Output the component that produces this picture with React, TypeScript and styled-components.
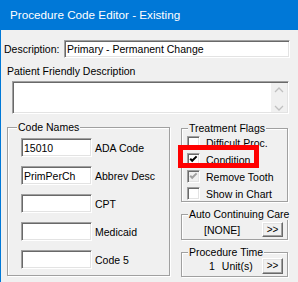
import React from 'react';
import styled, { createGlobalStyle, css } from 'styled-components';

const GlobalStyle = createGlobalStyle`
  body {
    margin: 0;
    background: #f0f0f0;
    font-family: 'Liberation Sans', Arial, sans-serif;
    font-size: 10.5px;
    color: #000;
  }
`;

const sunken = css`
  border: 1px solid;
  border-color: #a0a0a0 #ffffff #ffffff #a0a0a0;
  box-shadow: inset 1px 1px 0 #696969, inset -1px -1px 0 #e3e3e3;
`;

const Window = styled.div`
  width: 298px;
  height: 282px;
  box-sizing: border-box;
  border-left: 1px solid #0078d7;
  background: #f0f0f0;
  overflow: hidden;
`;

const TitleBar = styled.div`
  height: 30px;
  line-height: 30px;
  background: #0078d7;
  color: #fff;
  font-size: 11.7px;
  margin-left: -1px;
  padding-left: 10px;
`;

const Body = styled.div`
  padding-left: 3px;
`;

const DescRow = styled.div`
  display: flex;
  align-items: center;
  margin-top: 10px;
`;

const DescLabel = styled.label`
  width: 60px;
`;

const TextInput = styled.input<{ $width: number; $height: number }>`
  ${sunken};
  box-sizing: border-box;
  width: ${(p) => p.$width}px;
  height: ${(p) => p.$height}px;
  padding: 0 0 0 2px;
  margin: 0;
  background: #fff;
  font-family: inherit;
  font-size: 10.5px;
  outline: none;
`;

const PatientLabel = styled.div`
  margin: 7px 0 0 3px;
  line-height: 12px;
`;

const Memo = styled.div`
  ${sunken};
  box-sizing: border-box;
  display: flex;
  width: 277px;
  height: 33px;
  margin: 4px 0 0 8px;
  padding: 1px;
  background: #fff;
`;

const MemoText = styled.textarea`
  flex: 1;
  border: none;
  outline: none;
  resize: none;
  margin: 0;
  padding: 0;
  background: #fff;
  font-family: inherit;
  font-size: 10.5px;
`;

const ScrollCol = styled.div`
  width: 16px;
  display: flex;
  flex-direction: column;
  justify-content: space-between;
  align-items: center;
  padding: 4px 0 1px;
  background: #f0f0f0;
`;

const Bottom = styled.div`
  display: flex;
  margin-top: 7px;
`;

const Group = styled.fieldset<{ $width: number; $height: number }>`
  box-sizing: border-box;
  width: ${(p) => p.$width}px;
  height: ${(p) => p.$height}px;
  min-width: 0;
  margin: 0;
  padding: 0;
  border: 1px solid #a0a0a0;
  box-shadow: inset 1px 1px 0 #fff, 1px 1px 0 #fff;
`;

const Legend = styled.legend<{ $offset: number }>`
  margin-left: ${(p) => p.$offset}px;
  padding: 0 1px;
  line-height: 12px;
  background: #f0f0f0;
  white-space: nowrap;
`;

const CodesGroup = styled(Group)`
  margin-left: 3px;
`;

const CodeList = styled.div`
  display: flex;
  flex-direction: column;
  gap: 9px;
  padding: 5px 0 0 13px;
`;

const CodeRow = styled.div`
  display: flex;
  align-items: center;
  gap: 3px;
`;

const RightCol = styled.div`
  display: flex;
  flex-direction: column;
  gap: 6px;
  width: 107px;
  margin: 1px 0 0 11px;
`;

const FlagList = styled.div`
  padding-left: 5px;
`;

const FlagRow = styled.div`
  position: relative;
  display: flex;
  align-items: center;
  gap: 6px;
  height: 17px;
`;

const Box = styled.span<{ $disabled?: boolean }>`
  ${sunken};
  box-sizing: border-box;
  width: 13px;
  height: 13px;
  display: flex;
  align-items: center;
  justify-content: center;
  background: ${(p) => (p.$disabled ? '#f0f0f0' : '#fff')};
`;

const Highlight = styled.div`
  position: absolute;
  left: -9px;
  top: -6px;
  width: 81px;
  height: 23px;
  box-sizing: border-box;
  border: 5px solid #ff0000;
  z-index: 1;
  pointer-events: none;
`;

const ValueRow = styled.div<{ $indent: number; $top: number }>`
  display: flex;
  align-items: center;
  padding: ${(p) => p.$top}px 4px 0 ${(p) => p.$indent}px;
`;

const Units = styled.span`
  margin-left: 7px;
`;

const MoreButton = styled.button<{ $height: number }>`
  margin: 0 0 0 auto;
  padding: 0;
  width: 21px;
  height: ${(p) => p.$height}px;
  box-sizing: border-box;
  border: 1px solid;
  border-color: #fff #696969 #696969 #fff;
  box-shadow: inset -1px -1px 0 #a0a0a0, inset 1px 1px 0 #e3e3e3;
  background: #f0f0f0;
  font-family: inherit;
  font-size: 10px;
  line-height: 1;
  color: #000;
`;

const Chevron: React.FC<{ down?: boolean }> = ({ down }) => (
  <svg width="10" height="6" viewBox="0 0 10 6">
    <path
      d={down ? 'M1 1 L5 5 L9 1' : 'M1 5 L5 1 L9 5'}
      fill="none"
      stroke="#c0c0c0"
      strokeWidth="1.3"
    />
  </svg>
);

const CheckBox: React.FC<{ checked?: boolean; disabled?: boolean }> = ({
  checked,
  disabled,
}) => (
  <Box $disabled={disabled}>
    {checked && (
      <svg width="9" height="9" viewBox="0 0 9 9">
        <polyline
          points="1.2,3.8 3.2,5.8 7.6,1.4"
          fill="none"
          stroke={disabled ? '#a0a0a0' : '#000'}
          strokeWidth="2"
        />
      </svg>
    )}
  </Box>
);

const codes = [
  { value: '15010', label: 'ADA Code' },
  { value: 'PrimPerCh', label: 'Abbrev Desc' },
  { value: '', label: 'CPT' },
  { value: '', label: 'Medicaid' },
  { value: '', label: 'Code 5' },
];

const flags = [
  { label: 'Difficult Proc.', checked: false },
  { label: 'Condition', checked: true, marked: true },
  { label: 'Remove Tooth', checked: true, disabled: true },
  { label: 'Show in Chart', checked: false },
];

export default function App() {
  return (
    <Window>
      <GlobalStyle />
      <TitleBar>Procedure Code Editor - Existing</TitleBar>
      <Body>
        <DescRow>
          <DescLabel>Description:</DescLabel>
          <TextInput $width={226} $height={18} defaultValue="Primary - Permanent Change" />
        </DescRow>
        <PatientLabel>Patient Friendly Description</PatientLabel>
        <Memo>
          <MemoText />
          <ScrollCol>
            <Chevron />
            <Chevron down />
          </ScrollCol>
        </Memo>
        <Bottom>
          <CodesGroup $width={163} $height={155}>
            <Legend $offset={9}>Code Names</Legend>
            <CodeList>
              {codes.map((c) => (
                <CodeRow key={c.label}>
                  <TextInput $width={71} $height={19} defaultValue={c.value} />
                  <span>{c.label}</span>
                </CodeRow>
              ))}
            </CodeList>
          </CodesGroup>
          <RightCol>
            <Group $width={107} $height={80}>
              <Legend $offset={6}>Treatment Flags</Legend>
              <FlagList>
                {flags.map((f) => (
                  <FlagRow key={f.label}>
                    <CheckBox checked={f.checked} disabled={f.disabled} />
                    <span>{f.label}</span>
                    {f.marked && <Highlight />}
                  </FlagRow>
                ))}
              </FlagList>
            </Group>
            <Group $width={107} $height={32}>
              <Legend $offset={6}>Auto Continuing Care</Legend>
              <ValueRow $indent={22} $top={2}>
                <span>[NONE]</span>
                <MoreButton $height={15}>&gt;&gt;</MoreButton>
              </ValueRow>
            </Group>
            <Group $width={107} $height={31}>
              <Legend $offset={6}>Procedure Time</Legend>
              <ValueRow $indent={27} $top={0}>
                <span>1</span>
                <Units>Unit(s)</Units>
                <MoreButton $height={16}>&gt;&gt;</MoreButton>
              </ValueRow>
            </Group>
          </RightCol>
        </Bottom>
      </Body>
    </Window>
  );
}
